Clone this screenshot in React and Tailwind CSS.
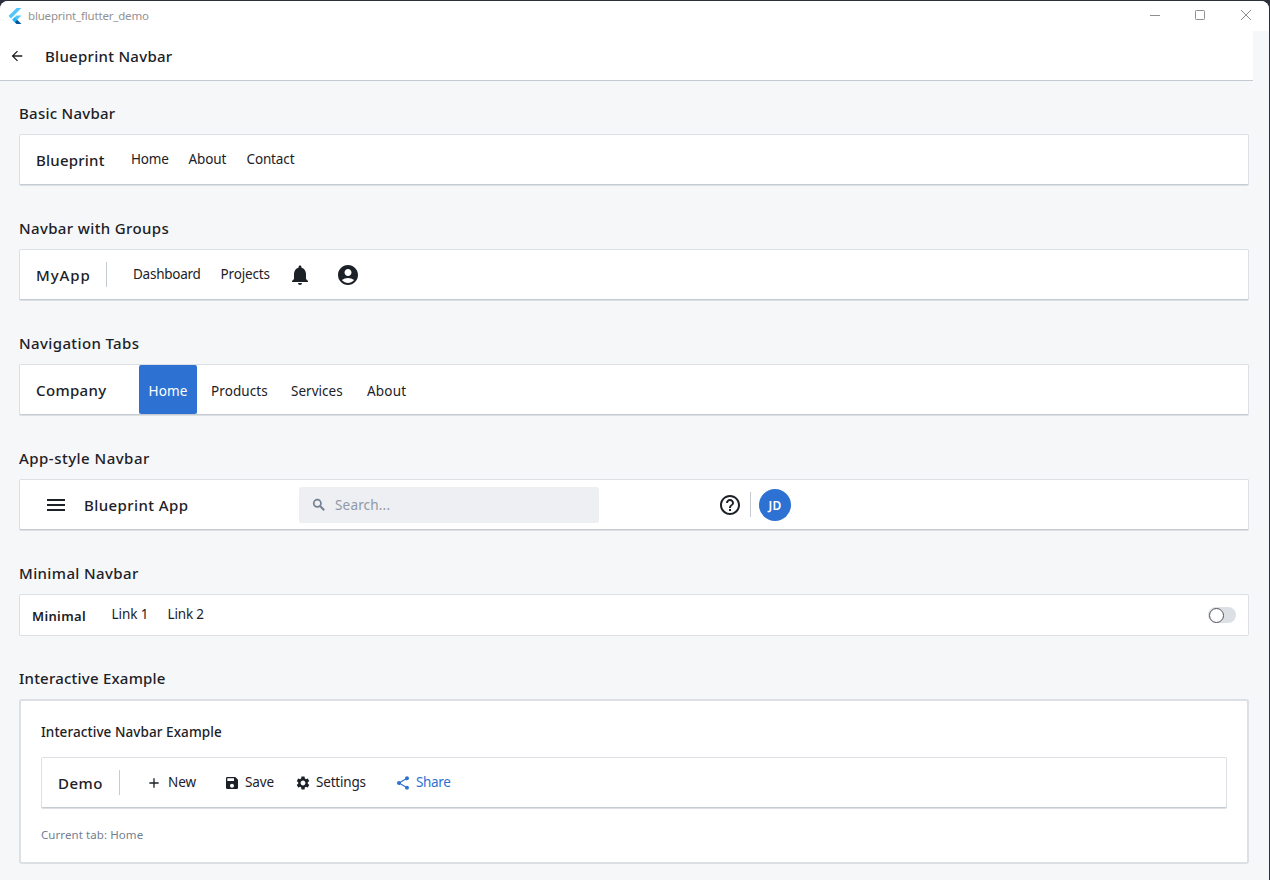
import {
  MdArrowBack,
  MdNotifications,
  MdAccountCircle,
  MdMenu,
  MdHelpOutline,
  MdAdd,
  MdSave,
  MdSettings,
  MdShare,
} from "react-icons/md";

function FlutterLogo() {
  return (
    <svg viewBox="0 0 24 24" className="h-4 w-4 shrink-0">
      <path fill="#54c5f8" d="M14.314 0 2.3 12 6 15.7 21.684.013z" />
      <path fill="#54c5f8" d="M14.328 11.072 7.857 17.53l3.7 3.7 10.123-10.158z" />
      <path fill="#29b6f6" d="M7.857 17.53l3.68-3.68 3.68 3.68-3.68 3.68z" />
      <path fill="#01579b" d="M11.54 21.21 14.327 24h7.353l-6.46-6.47z" />
    </svg>
  );
}

function SearchIcon() {
  return (
    <svg viewBox="0 0 24 24" className="size-4 shrink-0 text-[#738091]" fill="none" stroke="currentColor" strokeWidth="2.6">
      <circle cx="9.5" cy="9.5" r="5.4" />
      <path d="M13.6 13.6l6.2 6.2" strokeWidth="3" />
    </svg>
  );
}

function TitleBar() {
  return (
    <div className="flex h-[30px] shrink-0 items-center rounded-t-lg bg-white pl-[7px]">
      <FlutterLogo />
      <span className="ml-[5px] text-[11.5px] leading-[30px] tracking-[-0.18px] text-[#929292]">blueprint_flutter_demo</span>
      <div className="ml-auto flex items-center pr-[17px] pb-[2px] text-[#8f8f8f]">
        <svg viewBox="0 0 12 12" className="mr-[33px] h-3 w-3" fill="none" stroke="currentColor">
          <path d="M1 6.5h10" />
        </svg>
        <svg viewBox="0 0 12 12" className="mr-[34px] h-3 w-3" fill="none" stroke="currentColor">
          <rect x="1.5" y="1.5" width="9" height="9" rx="0.8" />
        </svg>
        <svg viewBox="0 0 12 12" className="h-3 w-3" fill="none" stroke="currentColor">
          <path d="M1 1l10 10M11 1 1 11" />
        </svg>
      </div>
    </div>
  );
}

function Section({ title, heading, className = "", children }) {
  return (
    <section className={className}>
      <h2 className={"mb-[9px] text-[15px] leading-6 font-medium " + heading}>{title}</h2>
      {children}
    </section>
  );
}

function Navbar({ className = "pl-4", children }) {
  return (
    <nav
      className={
        "flex h-[51px] items-center rounded-[2px] border border-[#dce0e5] border-b-[#c5cbd3] bg-white text-[13.5px] shadow-[0_1px_0_#dce0e5] " +
        className
      }
    >
      {children}
    </nav>
  );
}

function Brand({ className = "", children }) {
  return <span className={"shrink-0 pt-px text-[15px] leading-6 font-medium whitespace-nowrap " + className}>{children}</span>;
}

function Link({ className = "pb-[2px]", children }) {
  return <a className={"shrink-0 leading-5 whitespace-nowrap " + className}>{children}</a>;
}

function Divider({ className = "" }) {
  return <span className={"h-[25px] w-px shrink-0 bg-[#c5cbd3] " + className} />;
}

export default function App() {
  return (
    <div className="h-[880px] w-[1270px] overflow-hidden bg-[#2b303b] pt-px pr-px font-['Noto_Sans','Open_Sans',sans-serif] text-[#1c2127]">
      <div className="flex h-full flex-col rounded-t-lg bg-[#f6f7f9]">
        <TitleBar />
        <header className="flex h-[50px] w-[1253px] shrink-0 items-center border-b border-[#c5cbd3] bg-white pl-[9px]">
          <MdArrowBack className="size-4" />
          <h1 className="ml-5 text-[15px] leading-6 font-medium tracking-[0.28px]">Blueprint Navbar</h1>
        </header>

        <main className="w-[1268px] pt-5 pr-[19px] pl-[19px]">
          <Section title="Basic Navbar" heading="tracking-[0.26px]">
            <Navbar>
              <Brand className="w-[95px] tracking-[0.22px]">Blueprint</Brand>
              <Link className="w-[57.5px] pb-[2px] tracking-[-0.2px]">Home</Link>
              <Link className="w-[58px] pb-[2px] tracking-[-0.1px]">About</Link>
              <Link className="pb-[2px] tracking-[-0.14px]">Contact</Link>
            </Navbar>
          </Section>

          <Section title="Navbar with Groups" heading="tracking-[0.36px]" className="mt-[31px]">
            <Navbar>
              <Brand className="w-[70px] tracking-[0.9px]">MyApp</Brand>
              <Divider />
              <Link className="ml-[26px] w-[87.5px] pb-[2px] tracking-[-0.25px]">Dashboard</Link>
              <Link className="w-[67px] pb-[2px] tracking-[-0.17px]">Projects</Link>
              <MdNotifications className="size-6 shrink-0" />
              <MdAccountCircle className="ml-6 size-6 shrink-0" />
            </Navbar>
          </Section>

          <Section title="Navigation Tabs" heading="tracking-[0.38px]" className="mt-[31px]">
            <Navbar>
              <Brand className="w-[103px] tracking-[0.35px]">Company</Brand>
              <Link className="flex h-[49px] w-[58px] items-center justify-center rounded-[2px] bg-[#2d72d2] pt-[2px] tracking-[0.15px] text-white">
                Home
              </Link>
              <Link className="ml-[14px] w-20 pt-[2px] tracking-[0.08px]">Products</Link>
              <Link className="w-[76px] pt-[2px] tracking-[0.02px]">Services</Link>
              <Link className="pt-[2px] tracking-[0.2px]">About</Link>
            </Navbar>
          </Section>

          <Section title="App-style Navbar" heading="tracking-[0.48px]" className="mt-[31px]">
            <Navbar className="pl-6">
              <MdMenu className="size-6 shrink-0" />
              <Brand className="ml-4 w-[215px] tracking-[0.42px]">Blueprint App</Brand>
              <div className="flex h-9 w-[300px] shrink-0 items-center rounded-[2px] bg-[#edeff2] pl-3">
                <SearchIcon />
                <span className="ml-2 pt-[2px] tracking-[0.18px] text-[#8f99a8]">Search...</span>
              </div>
              <MdHelpOutline className="ml-[119px] size-6 shrink-0" />
              <Divider className="ml-2" />
              <span className="ml-2 flex size-8 shrink-0 items-center justify-center rounded-full bg-[#2d72d2] pt-[2px] text-[12px] font-semibold tracking-[0.29px] text-white">
                JD
              </span>
            </Navbar>
          </Section>

          <Section title="Minimal Navbar" heading="tracking-[0.38px]" className="mt-[31px]">
            <nav className="flex h-[42px] items-center rounded-[2px] border border-[#dce0e5] bg-white pr-3 pl-3 text-[13.5px]">
              <span className="w-[79.5px] pt-[3px] text-[13px] font-semibold tracking-[0.35px]">Minimal</span>
              <Link className="w-14 pb-[2px] tracking-[-0.05px]">Link 1</Link>
              <Link className="pb-[2px] tracking-[-0.15px]">Link 2</Link>
              <span className="ml-auto flex h-4 w-7 items-center rounded-full bg-[#dce0e5]">
                <span className="ml-[0.5px] size-[15px] rounded-full border border-[#50555c] bg-white" />
              </span>
            </nav>
          </Section>

          <Section title="Interactive Example" heading="tracking-[0.22px]" className="mt-[30px]">
            <div className="h-[165px] rounded-[3px] border-2 border-[#dce0e5] bg-white px-5 pt-[21px]">
              <h3 className="text-[13.5px] leading-5 font-medium tracking-[0.07px]">Interactive Navbar Example</h3>
              <Navbar className="mt-[15px] pl-4">
                <Brand className="w-[61px] tracking-[0.5px]">Demo</Brand>
                <Divider />
                <MdAdd className="ml-[26px] size-4 shrink-0" />
                <Link className="ml-[6px] w-[55.5px] pb-[2px] tracking-[-0.1px]">New</Link>
                <MdSave className="size-4 shrink-0" />
                <Link className="ml-[5.5px] w-[49.5px] pb-[2px] tracking-[-0.15px]">Save</Link>
                <MdSettings className="size-4 shrink-0" />
                <Link className="ml-[5.5px] w-[78.5px] pb-[2px] tracking-[-0.2px]">Settings</Link>
                <MdShare className="size-4 shrink-0 text-[#2d72d2]" />
                <Link className="ml-[5.5px] pb-[2px] tracking-[-0.35px] text-[#2d72d2]">Share</Link>
              </Navbar>
              <p className="mt-[17px] text-[11.5px] leading-5 tracking-[0.08px] text-[#738091]">Current tab: Home</p>
            </div>
          </Section>
        </main>
      </div>
    </div>
  );
}
